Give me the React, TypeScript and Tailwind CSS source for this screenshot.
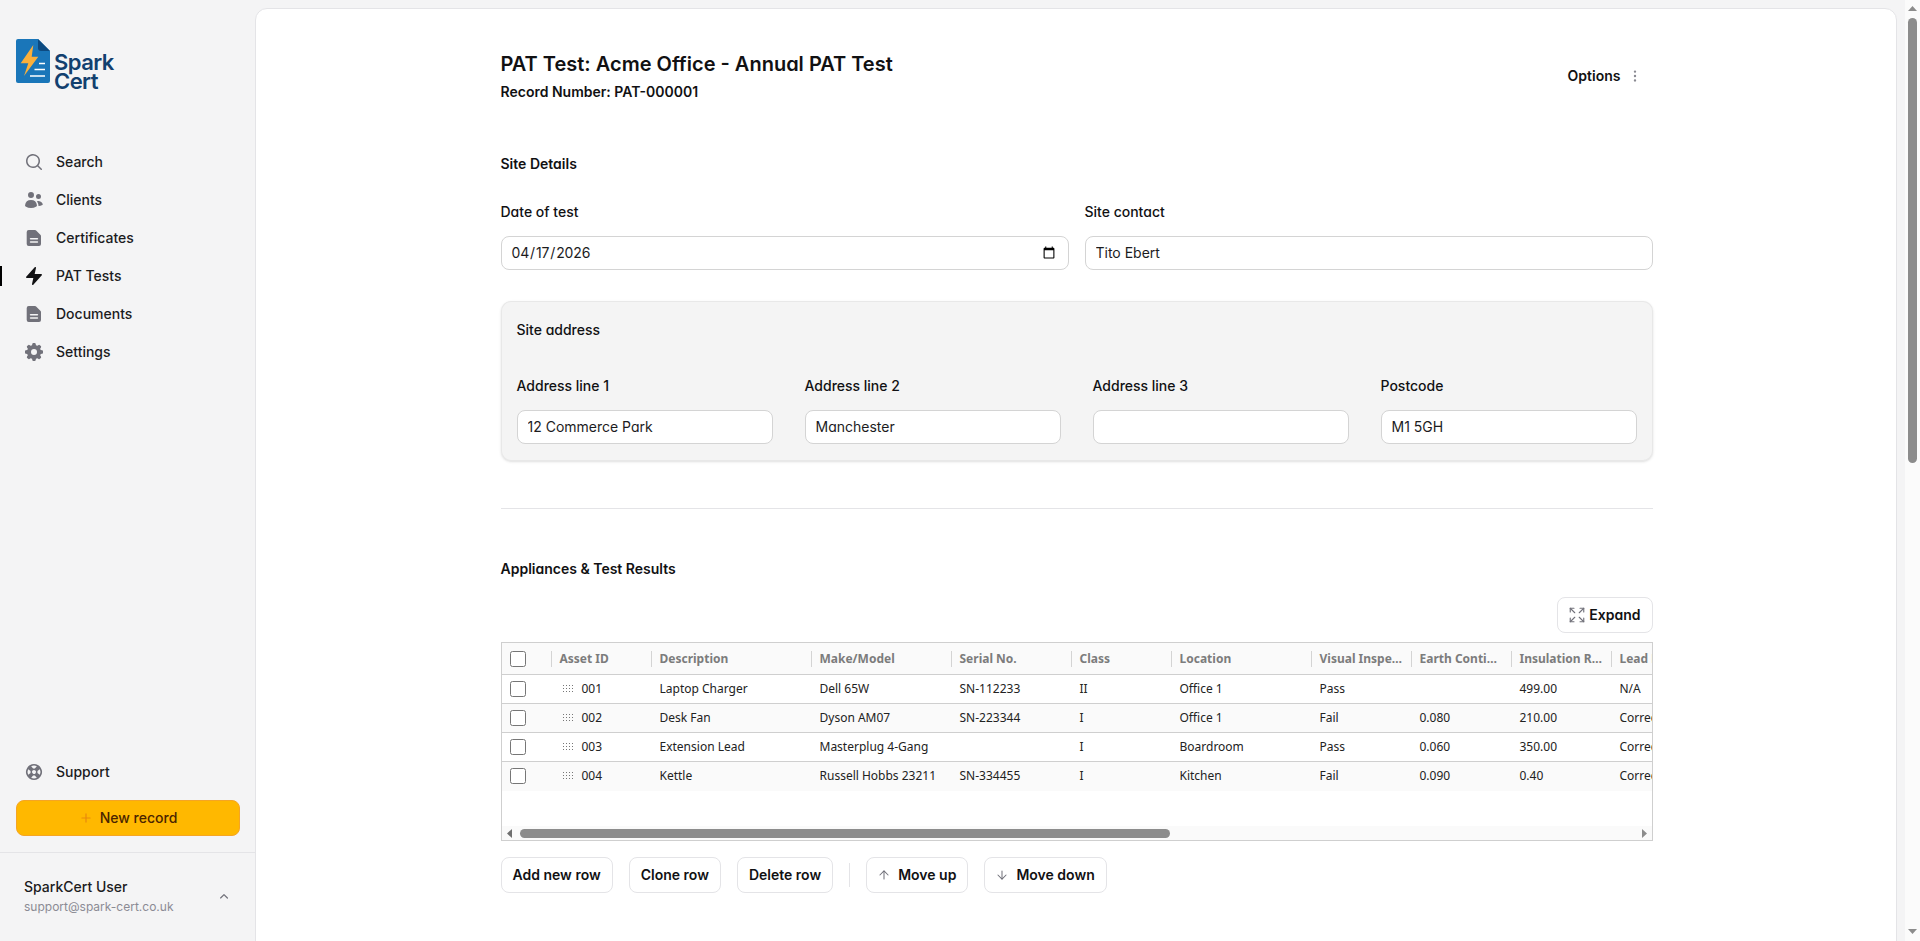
import { ArrowDown, ArrowUp, Expand, Plus } from 'lucide-react';
import {
  HiMiniBolt,
  HiMiniChevronUp,
  HiMiniCog8Tooth,
  HiMiniEllipsisVertical,
  HiMiniLifebuoy,
  HiMiniMagnifyingGlass,
  HiMiniUsers,
} from 'react-icons/hi2';

function DocIcon({ size, className }: { size: number; className?: string }) {
  return (
    <svg width={size} height={size} viewBox="0 0 20 20" className={className}>
      <path
        fill="currentColor"
        fillRule="evenodd"
        d="M4.7 2H11a1.5 1.5 0 0 1 1.1.4L16.6 7a1.5 1.5 0 0 1 .4 1V16a2 2 0 0 1-2 2H4.7a2 2 0 0 1-2-2V4a2 2 0 0 1 2-2zM6.6 10a.8.8 0 0 0 0 1.6h6.8a.8.8 0 0 0 0-1.6zM6.6 13.2a.8.8 0 0 0 0 1.6h6.8a.8.8 0 0 0 0-1.6z"
      />
    </svg>
  );
}

const navItems = [
  { label: 'Search', icon: HiMiniMagnifyingGlass },
  { label: 'Clients', icon: HiMiniUsers },
  { label: 'Certificates', icon: DocIcon },
  { label: 'PAT Tests', icon: HiMiniBolt, active: true },
  { label: 'Documents', icon: DocIcon },
  { label: 'Settings', icon: HiMiniCog8Tooth },
];

const headers = [
  'Asset ID',
  'Description',
  'Make/Model',
  'Serial No.',
  'Class',
  'Location',
  'Visual Inspection',
  'Earth Continuity',
  'Insulation Resistance',
  'Lead Polarity',
];

const rows = [
  ['001', 'Laptop Charger', 'Dell 65W', 'SN-112233', 'II', 'Office 1', 'Pass', '', '499.00', 'N/A'],
  ['002', 'Desk Fan', 'Dyson AM07', 'SN-223344', 'I', 'Office 1', 'Fail', '0.080', '210.00', 'Correct'],
  ['003', 'Extension Lead', 'Masterplug 4-Gang', '', 'I', 'Boardroom', 'Pass', '0.060', '350.00', 'Correct'],
  ['004', 'Kettle', 'Russell Hobbs 23211', 'SN-334455', 'I', 'Kitchen', 'Fail', '0.090', '0.40', 'Correct'],
];

const rowGrid = 'grid grid-cols-[50px_100px_160px_140px_120px_100px_140px_100px_100px_100px_1fr]';
const inputClass =
  'block w-full h-[34px] bg-white border border-[#d4d4d4] rounded-lg text-sm text-[#1c1c1e] outline-none';
const buttonClass =
  'h-9 flex items-center bg-white border border-[#e4e4e7] rounded-lg text-sm font-semibold text-[#111113]';

function Logo() {
  return (
    <div className="flex items-end gap-1">
      <svg width="34" height="44" viewBox="16 39 34 44">
        <path d="M18 39H38L50 51V81a2 2 0 0 1-2 2H18a2 2 0 0 1-2-2V41a2 2 0 0 1 2-2z" fill="#1a76b9" />
        <path d="M38 39L50 51H41a3 3 0 0 1-3-3z" fill="#0d4a80" />
        <path d="M33.3 45L20.7 63.3H28.3L24 76L38.3 56.7H31.7z" fill="#fbb03b" />
        <path d="M39 63.5H45M34.5 69.5H45M30 76H45" stroke="#fff" strokeWidth="1.6" />
      </svg>
      <div className="text-[22px] leading-[19px] font-semibold text-[#12406f] tracking-tight mb-[-8px]">
        <div>Spark</div>
        <div>Cert</div>
      </div>
    </div>
  );
}

function Sidebar() {
  return (
    <aside className="sticky top-0 h-screen w-[255px] shrink-0 flex flex-col font-[Inter,sans-serif] text-[#1c1c1e]">
      <div className="pl-4 pt-[39px] h-[143px]">
        <Logo />
      </div>
      <nav>
        {navItems.map((item) => (
          <div key={item.label} className="relative h-[38px] flex items-center gap-3 px-6 text-sm font-medium">
            {item.active && <div className="absolute left-0 top-[9px] h-5 w-[2px] bg-black" />}
            <item.icon size={20} className={item.active ? 'text-[#111113]' : 'text-[#71717a]'} />
            {item.label}
          </div>
        ))}
      </nav>
      <div className="mt-auto">
        <div className="h-[38px] flex items-center gap-3 px-6 text-sm font-medium">
          <HiMiniLifebuoy size={20} className="text-[#71717a]" />
          Support
        </div>
        <div className="pl-4 pr-[15px] mt-[9px]">
          <button className="w-full h-9 flex items-center justify-center gap-[7px] bg-[#ffb800] border border-[#f5a524] rounded-lg text-sm font-medium text-[#4a2400]">
            <Plus size={14} className="text-[#e8890c]" />
            New record
          </button>
        </div>
        <div className="mt-4 h-[89px] border-t border-[#e4e4e7] flex items-center justify-between pl-6 pr-[23px]">
          <div>
            <div className="text-sm font-medium leading-5">SparkCert User</div>
            <div className="text-xs leading-5 text-[#8b8b94]">support@spark-cert.co.uk</div>
          </div>
          <HiMiniChevronUp size={16} className="text-[#71717a]" />
        </div>
      </div>
    </aside>
  );
}

function PageScrollbar() {
  return (
    <div className="sticky top-0 h-screen w-[15px] shrink-0 bg-[#fbfbfb] flex flex-col items-center">
      <svg width="9" height="5" viewBox="0 0 9 5" className="mt-[6px] shrink-0">
        <path d="M4.5 0L9 5H0z" fill="#8c8c8c" />
      </svg>
      <div className="mt-[7px] w-[9px] h-[445px] rounded-full bg-[#8c8c8c]" />
      <svg width="9" height="5" viewBox="0 0 9 5" className="mt-auto mb-[7px] shrink-0">
        <path d="M0 0H9L4.5 5z" fill="#8c8c8c" />
      </svg>
    </div>
  );
}

function Field({ label, value, type }: { label: string; value: string; type?: string }) {
  return (
    <div>
      <div className="text-sm leading-5 font-medium text-[#111113] mb-[14px]">{label}</div>
      <input
        type={type ?? 'text'}
        defaultValue={value}
        className={`${inputClass} ${type === 'date' ? 'pl-[9px] pr-[10px] tracking-[-0.15px]' : 'px-[10px] pb-[2px]'}`}
      />
    </div>
  );
}

function DragHandle() {
  return (
    <svg width="10" height="8" viewBox="0 0 10 8" className="text-[#777] shrink-0">
      <path
        d="M0 0h1v1H0zM3 0h1v1H3zM6 0h1v1H6zM9 0h1v1H9zM0 3h1v1H0zM3 3h1v1H3zM6 3h1v1H6zM9 3h1v1H9zM0 6h1v1H0zM3 6h1v1H3zM6 6h1v1H6zM9 6h1v1H9z"
        fill="currentColor"
      />
    </svg>
  );
}

function ResultsGrid() {
  return (
    <div className="mt-[9px] h-[199px] border border-[#cfcfcf] flex flex-col bg-white font-['Noto_Sans',sans-serif] text-xs text-[#222]">
      <div className="flex-1 min-h-0 overflow-hidden">
        <div className="w-[1978px]">
          {/* Header */}
          <div className={`${rowGrid} h-8 bg-[#fafafa] border-b border-[#cfcfcf] font-bold text-[#7c7c7c]`}>
            <div className="flex items-center pl-2">
              <input type="checkbox" className="w-4 h-4 m-0" />
              <div className="ml-auto w-px h-4 bg-[#d4d4d4]" />
            </div>
            {headers.map((header) => (
              <div key={header} className="flex items-center min-w-0">
                <span className="flex-1 min-w-0 px-2 truncate">{header}</span>
                <div className="w-px h-4 bg-[#d4d4d4] shrink-0" />
              </div>
            ))}
          </div>

          {/* Rows */}
          {rows.map((row, i) => (
            <div
              key={row[0]}
              className={`${rowGrid} h-[29px] border-b ${i % 2 === 1 ? 'bg-[#fafafa]' : 'bg-white'} ${i < 3 ? 'border-[#cfcfcf]' : 'border-transparent'}`}
            >
              <div className="flex items-center pl-2">
                <input type="checkbox" className="w-4 h-4 m-0" />
              </div>
              <div className="flex items-center gap-[9px] pl-[11px]">
                <DragHandle />
                {row[0]}
              </div>
              {row.slice(1).map((cell, j) => (
                <div key={j} className="flex items-center px-2 truncate">
                  {cell}
                </div>
              ))}
            </div>
          ))}
        </div>
      </div>

      {/* Horizontal scrollbar */}
      <div className="h-[14px] shrink-0 bg-[#fafafa] flex items-center">
        <div className="w-[15px] flex justify-center">
          <svg width="5" height="9" viewBox="0 0 5 9">
            <path d="M5 0V9L0 4.5z" fill="#6f6f6f" />
          </svg>
        </div>
        <div className="ml-[3px] w-[650px] h-[9px] rounded-full bg-[#8c8c8c]" />
        <div className="ml-auto w-[15px] flex justify-center">
          <svg width="5" height="9" viewBox="0 0 5 9">
            <path d="M0 0V9L5 4.5z" fill="#8c8c8c" />
          </svg>
        </div>
      </div>
    </div>
  );
}

export default function App() {
  return (
    <div className="flex bg-[#f4f4f5] min-h-screen">
      <Sidebar />
      <div className="flex-1 min-w-0 pt-2 pb-2 pr-2">
        <main className="min-h-[1902px] bg-white border border-[#e4e4e7] rounded-xl pl-px pt-[41px] font-[Inter,sans-serif] [font-feature-settings:'cv11'] text-[#111113]">
          <div className="max-w-[1152px] mx-auto">
            {/* Header */}
            <div className="flex items-center justify-between">
              <div>
                <h1 className="text-xl leading-7 font-semibold">PAT Test: Acme Office - Annual PAT Test</h1>
                <div className="text-sm leading-5 font-semibold mt-1">Record Number: PAT-000001</div>
              </div>
              <button className="flex items-center gap-[6px] px-[10px] text-sm font-semibold">
                Options
                <HiMiniEllipsisVertical size={16} className="text-[#8a8a92]" />
              </button>
            </div>

            {/* Site details */}
            <h2 className="text-sm leading-5 font-semibold mt-[52px]">Site Details</h2>
            <div className="grid grid-cols-2 gap-4 mt-7">
              <Field label="Date of test" value="2026-04-17" type="date" />
              <Field label="Site contact" value="Tito Ebert" />
            </div>

            <div className="mt-[31px] h-[160px] bg-[#f4f4f4] ring-1 ring-inset ring-[#e8e8e8] rounded-[10px] shadow-sm px-4 pt-[17px]">
              <div className="text-sm leading-6 font-medium">Site address</div>
              <div className="grid grid-cols-4 gap-8 mt-[34px]">
                <Field label="Address line 1" value="12 Commerce Park" />
                <Field label="Address line 2" value="Manchester" />
                <Field label="Address line 3" value="" />
                <Field label="Postcode" value="M1 5GH" />
              </div>
            </div>

            <div className="mt-[47px] border-t border-[#e4e4e7]" />

            {/* Appliances */}
            <h2 className="text-sm leading-5 font-semibold mt-[50px]">Appliances &amp; Test Results</h2>
            <div className="flex justify-end mt-[18px]">
              <button className={`${buttonClass} gap-[3px] pl-[10px] pr-[11px]`}>
                <Expand size={18} strokeWidth={1.5} className="text-[#71717a]" />
                Expand
              </button>
            </div>

            <ResultsGrid />

            <div className="flex items-center gap-4 mt-[16px]">
              <button className={`${buttonClass} px-[11px]`}>Add new row</button>
              <button className={`${buttonClass} px-[11px]`}>Clone row</button>
              <button className={`${buttonClass} px-[11px]`}>Delete row</button>
              <div className="w-px h-6 bg-[#e4e4e7]" />
              <button className={`${buttonClass} gap-[7px] pl-[10px] pr-[11px]`}>
                <ArrowUp size={14} strokeWidth={1.75} className="text-[#71717a]" />
                Move up
              </button>
              <button className={`${buttonClass} gap-[7px] pl-[10px] pr-[11px]`}>
                <ArrowDown size={14} strokeWidth={1.75} className="text-[#71717a]" />
                Move down
              </button>
            </div>
          </div>
        </main>
      </div>
      <PageScrollbar />
    </div>
  );
}
